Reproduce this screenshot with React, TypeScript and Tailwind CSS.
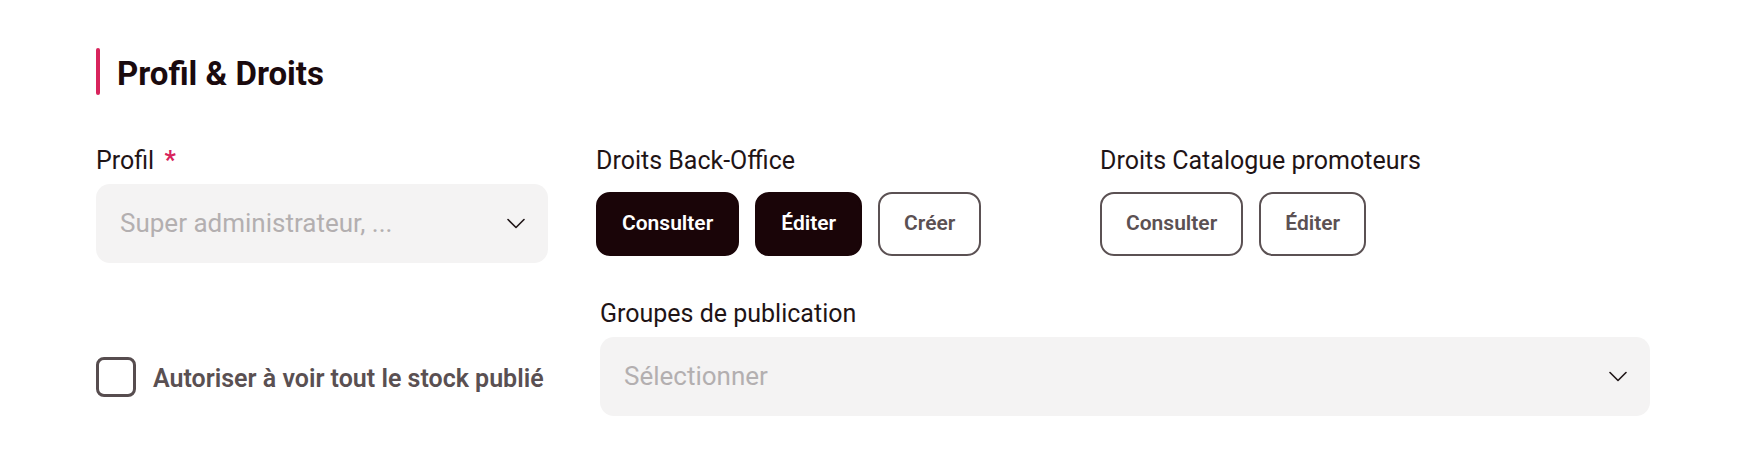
import React from "react";

const font = { fontFamily: "Roboto, 'Noto Sans', sans-serif" };

const Chevron = () => (
  <svg width="18" height="11" viewBox="0 0 18 11" fill="none">
    <path d="M1 1.5L9 9.5L17 1.5" stroke="#1f1416" strokeWidth="1.6" strokeLinecap="round" strokeLinejoin="round" />
  </svg>
);

const RightButton = ({ label, active }: { label: string; active?: boolean }) => (
  <button
    type="button"
    className={
      active
        ? "h-16 px-6 rounded-[14px] bg-[#1a0508] text-white text-[21px] font-semibold border-2 border-[#1a0508]"
        : "h-16 px-6 rounded-[14px] bg-white text-[#5b5153] text-[21px] font-semibold border-2 border-[#5b5153]"
    }
  >
    {label}
  </button>
);

const App = () => {
  return (
    <div className="w-[1746px] h-[464px] bg-white px-24 pt-12" style={font}>
      <div className="flex items-center h-[47px] gap-[17px]">
        <div className="w-1 h-full rounded-full bg-[#d8245c]" />
        <h2 className="text-[33px] font-bold text-[#1a0a0e] leading-none pt-1">Profil &amp; Droits</h2>
      </div>

      <div className="grid grid-cols-[452px_456px_1fr] gap-x-12 mt-[50px]">
        <div className="flex flex-col gap-[7px]">
          <label className="text-[25px] leading-8 text-[#1f1416]">
            Profil <span className="ml-1 text-[#d8245c] font-bold">*</span>
          </label>
          <div className="h-[79px] rounded-[14px] bg-[#f4f3f3] flex items-center justify-between pl-[24px] pr-[23px]">
            <span className="text-[26px] text-[#b3afb0]">Super administrateur, ...</span>
            <Chevron />
          </div>
        </div>

        <div className="flex flex-col gap-[7px]">
          <label className="text-[25px] leading-8 text-[#1f1416]">Droits Back-Office</label>
          <div className="h-[79px] flex items-center gap-4">
            <RightButton label="Consulter" active />
            <RightButton label="Éditer" active />
            <RightButton label="Créer" />
          </div>
        </div>

        <div className="flex flex-col gap-[7px]">
          <label className="text-[25px] leading-8 text-[#1f1416]">Droits Catalogue promoteurs</label>
          <div className="h-[79px] flex items-center gap-4">
            <RightButton label="Consulter" />
            <RightButton label="Éditer" />
          </div>
        </div>
      </div>

      <div className="grid grid-cols-[452px_1fr] gap-x-[52px] mt-[35px]">
        <div className="flex items-end">
          <label className="h-[79px] flex items-center gap-[17px] cursor-pointer">
            <span className="w-10 h-10 rounded-[8px] border-[3px] border-[#574d4f] bg-white" />
            <span className="text-[25px] font-semibold text-[#5a5052] pt-1">Autoriser à voir tout le stock publié</span>
          </label>
        </div>
        <div className="flex flex-col gap-[7px]">
          <label className="text-[25px] leading-8 text-[#1f1416]">Groupes de publication</label>
          <div className="h-[79px] rounded-[14px] bg-[#f4f3f3] flex items-center justify-between pl-[24px] pr-[23px]">
            <span className="text-[26px] text-[#b3afb0]">Sélectionner</span>
            <Chevron />
          </div>
        </div>
      </div>
    </div>
  );
};

export default App;
